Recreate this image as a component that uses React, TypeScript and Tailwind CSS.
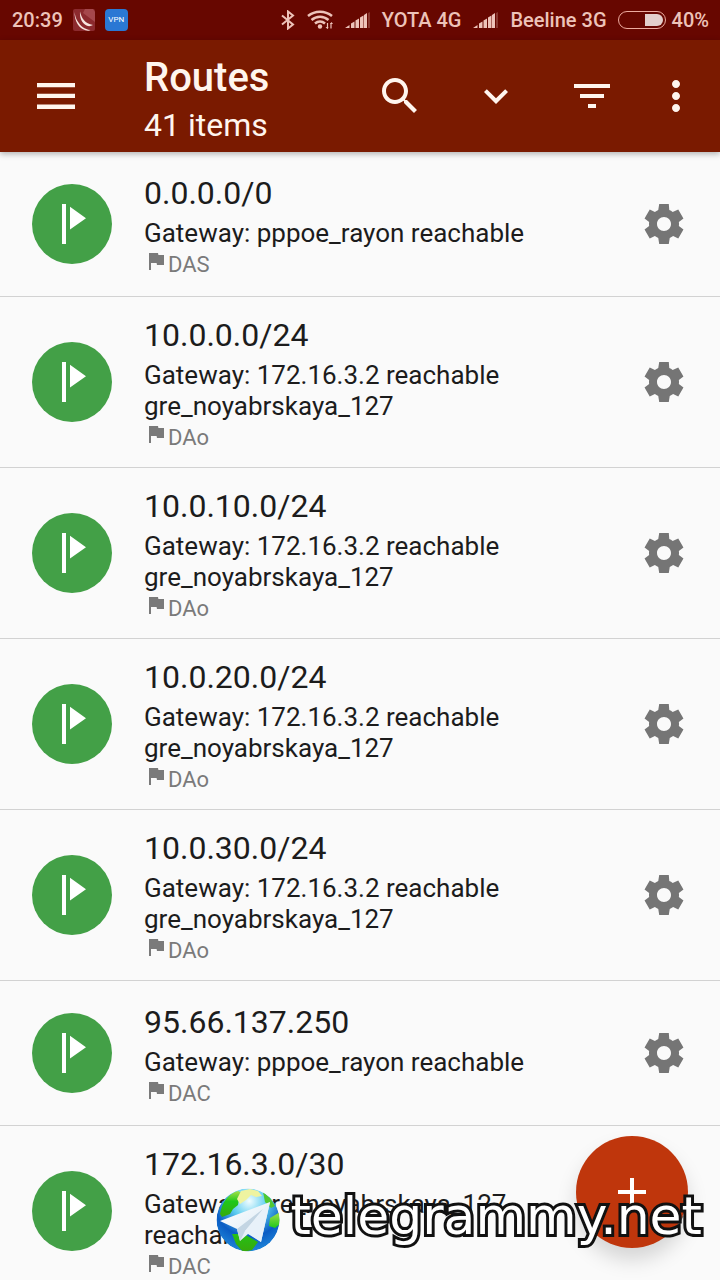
import type { ReactNode } from "react";

type Route = {
    address: string;
    gateway: string[];
    flags: string;
};

const routes: Route[] = [
    { address: "0.0.0.0/0", gateway: ["Gateway: pppoe_rayon reachable"], flags: "DAS" },
    { address: "10.0.0.0/24", gateway: ["Gateway: 172.16.3.2 reachable", "gre_noyabrskaya_127"], flags: "DAo" },
    { address: "10.0.10.0/24", gateway: ["Gateway: 172.16.3.2 reachable", "gre_noyabrskaya_127"], flags: "DAo" },
    { address: "10.0.20.0/24", gateway: ["Gateway: 172.16.3.2 reachable", "gre_noyabrskaya_127"], flags: "DAo" },
    { address: "10.0.30.0/24", gateway: ["Gateway: 172.16.3.2 reachable", "gre_noyabrskaya_127"], flags: "DAo" },
    { address: "95.66.137.250", gateway: ["Gateway: pppoe_rayon reachable"], flags: "DAC" },
    { address: "172.16.3.0/30", gateway: ["Gateway: gre_noyabrskaya_127", "reachable"], flags: "DAC" },
];

const SETTINGS_PATH =
    "M19.430 12.980c.04-.32.07-.64.07-.98s-.03-.66-.07-.98l2.300-1.750-2.600-4.500-2.800 1.220c-.52-.4-1.080-.73-1.690-.98L14.400 2H9.600l-.47 3.050c-.61.25-1.170.59-1.690.98L4.870 4.770l-2.600 4.500 2.300 1.750c-.04.32-.07.65-.07.98s.03.66.07.98l-2.300 1.750 2.600 4.500 2.570-1.220c.52.4 1.080.73 1.690.98L9.600 22h4.800l.47-3.050c.61-.25 1.170-.59 1.690-.98l2.570 1.260 2.600-4.500-2.300-1.750zM12 15.500c-1.930 0-3.500-1.570-3.500-3.500s1.570-3.500 3.500-3.500 3.500 1.570 3.500 3.500-1.570 3.500-3.500 3.500z";

const Icon = ({ d, className }: { d: string; className: string }) => (
    <svg viewBox="0 0 24 24" fill="currentColor" className={className} aria-hidden="true">
        <path d={d} />
    </svg>
);

const SignalBars = () => (
    <svg viewBox="0 0 26 18" className="h-[18px] w-[26px]" fill="currentColor" aria-hidden="true">
        <path d="M0 17l4.500-3v3zM6 12.500l3.500-2V17H6zM10.500 9.500l3.500-2V17h-3.500zM15 6.500l3.500-2V17H15zM19 4l3-2v15h-3z" />
        <path d="M23 2l2-1v16h-2z" opacity=".25" />
    </svg>
);

const StatusBar = () => (
    <div className="flex h-10 items-center justify-between bg-[#670700] pl-3 pr-[11px] text-xl font-medium text-[#edc3b9]">
        <div className="flex items-center">
            <span>20:39</span>
            {/* WinBox */}
            <svg viewBox="0 0 22 22" className="ml-2.5 size-[22px]" aria-hidden="true">
                <rect width="22" height="22" rx="2" fill="#8c2a2e" />
                <path d="M12 0h8l2 3v10L10 4z" fill="#a5484c" />
                <path d="M1.500 3c.8 4 1.200 6 3 9 3 5 7 8.500 13 9-1 .8-3 .8-5 .3C6 19 1.500 13 1.500 3z" fill="#f8e6e0" />
                <path d="M7 2.500c1.500 7 5 12 13 13.500-2 1.200-4 1.500-6 .8C9 14.500 6.500 9 7 2.500z" fill="#f8e6e0" />
            </svg>
            <span className="ml-2.5 flex h-[22px] w-[23px] items-center justify-center rounded bg-[#2a78d4] text-[8px] font-normal text-white">
                VPN
            </span>
        </div>
        <div className="flex items-center">
            {/* Bluetooth */}
            <svg viewBox="0 0 14 20" className="h-5 w-3.5" fill="none" stroke="currentColor" strokeWidth="2" aria-hidden="true">
                <path d="M1 5.500l11 9L7 18.500V1.500l5 4-11 9" />
            </svg>
            {/* Wi-Fi */}
            <svg viewBox="0 0 26 20" className="ml-3 h-5 w-[26px]" fill="none" stroke="currentColor" aria-hidden="true">
                <path d="M1 6c7-5.800 17-5.800 24 0M4.500 10c5-4.400 12-4.400 17 0M8 13.500c3-2.600 7-2.600 10 0" strokeWidth="2.500" />
                <circle cx="13" cy="16.500" r="2.200" fill="currentColor" stroke="none" />
                <path d="M20.500 13v5.500M24 13v5.500" strokeWidth="1.200" />
                <path d="M18.500 17h3l-1 2zM23 14h3l-1.500-2z" fill="currentColor" stroke="none" />
            </svg>
            <span className="ml-3 flex">
                <SignalBars />
            </span>
            <span className="ml-[11px]">YOTA 4G</span>
            <span className="ml-3 flex">
                <SignalBars />
            </span>
            <span className="ml-[11px]">Beeline 3G</span>
            <span className="ml-[11px] flex h-[18px] w-12 justify-end rounded-full border border-[#edab9f] p-0.5">
                <span className="w-[18px] rounded-r-full bg-[#e3cfcb]" />
            </span>
            <span className="ml-1.5">40%</span>
        </div>
    </div>
);

const BarButton = ({ label, className, children }: { label: string; className: string; children: ReactNode }) => (
    <button type="button" aria-label={label} className={`flex h-28 items-center justify-center ${className}`}>
        {children}
    </button>
);

const AppBar = () => (
    <header className="relative z-10 flex items-center bg-[#7a1a00] text-[#fff5ee] shadow-[0_2px_6px_rgba(0,0,0,0.3)]">
        <BarButton label="Open menu" className="w-28">
            <svg viewBox="0 0 38 26" className="h-[26px] w-[38px]" fill="currentColor" aria-hidden="true">
                <path d="M0 0h38v4.300H0zM0 10.800h38v4.300H0zM0 21.600h38v4.300H0z" />
            </svg>
        </BarButton>
        <div className="ml-8 flex-1 pt-2.5">
            <h1 className="text-[40px] font-medium leading-[48px]">Routes</h1>
            <p className="text-[32px] leading-[46px]">41 items</p>
        </div>
        <BarButton label="Search" className="w-24">
            <Icon
                className="size-12"
                d="M15.500 14h-.79l-.28-.27C15.410 12.590 16 11.110 16 9.500 16 5.910 13.090 3 9.500 3S3 5.910 3 9.500 5.910 16 9.500 16c1.610 0 3.090-.59 4.230-1.570l.27.28v.79l5 4.990L20.490 19l-4.990-5zm-6 0C7.010 14 5 11.990 5 9.500S7.010 5 9.500 5 14 7.010 14 9.500 11.990 14 9.500 14z"
            />
        </BarButton>
        <BarButton label="Expand" className="w-24">
            <Icon className="size-12" d="M16.590 8.590L12 13.170 7.410 8.590 6 10l6 6 6-6z" />
        </BarButton>
        <BarButton label="Filter" className="w-24">
            <Icon className="size-12" d="M10 18h4v-2h-4v2zM3 6v2h18V6H3zm3 7h12v-2H6v2z" />
        </BarButton>
        <BarButton label="More options" className="mr-2 w-[72px]">
            <Icon
                className="size-12"
                d="M12 8c1.100 0 2-.9 2-2s-.9-2-2-2-2 .9-2 2 .9 2 2 2zm0 2c-1.100 0-2 .9-2 2s.9 2 2 2 2-.9 2-2-.9-2-2-2zm0 6c-1.100 0-2 .9-2 2s.9 2 2 2 2-.9 2-2-.9-2-2-2z"
            />
        </BarButton>
    </header>
);

const RouteRow = ({ route }: { route: Route }) => (
    <li className="flex min-h-[145px] items-center border-b border-[#d2d2d2] px-8">
        <svg viewBox="0 0 80 80" className="size-20 shrink-0" aria-hidden="true">
            <circle cx="40" cy="40" r="40" fill="#43a047" />
            <path d="M30 20h4v40h-4zM38 22.700v22.900l16-11.400z" fill="#fff" />
        </svg>
        <div className="ml-8 flex-1 pb-4 pt-5">
            <h2 className="text-[32px] leading-9 text-[#1c1c1c]">{route.address}</h2>
            <p className="mt-[7px] text-[26px] leading-[31px] text-[#1c1c1c]">
                {route.gateway.map((line) => (
                    <span key={line} className="block">
                        {line}
                    </span>
                ))}
            </p>
            <p className="mt-[3px] flex items-start text-[22px] leading-[26px] text-[#7a7a7a]">
                <Icon className="-mt-[3px] size-6" d="M14.400 6L14 4H5v17h2v-7h5.600l.4 2h7V6z" />
                {route.flags}
            </p>
        </div>
        <button type="button" aria-label={`Settings for ${route.address}`} className="text-[#757575]">
            <Icon className="size-12" d={SETTINGS_PATH} />
        </button>
    </li>
);

const Watermark = () => (
    <div className="pointer-events-none fixed bottom-7 right-[18px] z-30 flex items-center">
        <svg viewBox="0 0 64 64" className="size-16" aria-hidden="true">
            <defs>
                <radialGradient id="sea" cx="52%" cy="20%" r="80%">
                    <stop offset="0" stopColor="#f2fdff" />
                    <stop offset=".35" stopColor="#5ccdf0" />
                    <stop offset=".7" stopColor="#0a5cc4" />
                    <stop offset="1" stopColor="#1f86d8" />
                </radialGradient>
                <linearGradient id="land" x1="0" y1="0" x2="0" y2="1">
                    <stop offset="0" stopColor="#a6e04a" />
                    <stop offset=".4" stopColor="#1fc81a" />
                    <stop offset="1" stopColor="#38a80c" />
                </linearGradient>
                <linearGradient id="plane" x1="0" y1="0" x2="1" y2="1">
                    <stop offset="0" stopColor="#fff" />
                    <stop offset="1" stopColor="#d8e8f4" />
                </linearGradient>
                <clipPath id="globe">
                    <circle cx="32" cy="32" r="31.500" />
                </clipPath>
            </defs>
            <g clipPath="url(#globe)">
                <circle cx="32" cy="32" r="31.500" fill="url(#sea)" />
                <path d="M4 26C6 14 12 6 22 3l6 3-5 5-1 6-5 4-3 5-8 3z" fill="url(#land)" />
                <path d="M25 3l9-2 8 2 4 5-6 1-5-2-5 5-6 4-3-5z" fill="#eef3a0" />
                <path d="M47 4l7 6 5 8-4 2-6-6z" fill="#4fc832" />
                <path d="M54 30l10-6v12l-5 4-6-2zM16 46l12 0 14 8-6 8-9 2-7-8z" fill="url(#land)" />
            </g>
            <path d="M4 33L54 14 45 54 32 46l-8 7-3-12z" fill="url(#plane)" />
            <path d="M21 41l26-20-18 22-5 10z" fill="#c3d5e3" />
            <path d="M29 43l25-29-9 40z" fill="#e8f1f9" />
        </svg>
        <span className="ml-2.5 pb-2 text-[52px] leading-[56px] text-white [font-family:'DejaVu_Sans',sans-serif] [paint-order:stroke_fill] [-webkit-text-stroke:6px_#111]">
            telegrammy.net
        </span>
    </div>
);

export default function App() {
    return (
        <div className="h-screen overflow-hidden bg-[#fafafa] [font-family:Roboto,sans-serif]">
            <StatusBar />
            <AppBar />
            <ul>
                {routes.map((route) => (
                    <RouteRow key={route.address} route={route} />
                ))}
            </ul>
            <button
                type="button"
                aria-label="Add route"
                className="fixed bottom-8 right-8 z-20 flex size-28 items-center justify-center rounded-full bg-[#bf360c] text-white shadow-[0_12px_20px_rgba(0,0,0,0.15)]"
            >
                <Icon className="size-12" d="M19 13h-6v6h-2v-6H5v-2h6V5h2v6h6v2z" />
            </button>
            <Watermark />
        </div>
    );
}
